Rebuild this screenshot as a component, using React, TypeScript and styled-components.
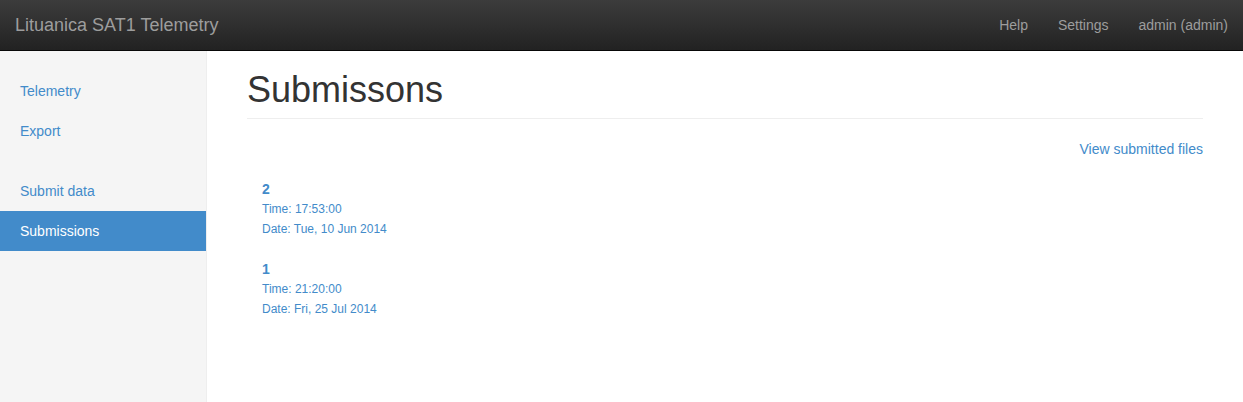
import React from "react";
import styled, { createGlobalStyle } from "styled-components";

const GlobalStyle = createGlobalStyle`
  html, body {
    margin: 0;
    padding: 0;
    background: #fff;
  }
  body {
    font-family: "Liberation Sans", Arial, Helvetica, sans-serif;
    font-size: 14px;
    line-height: 20px;
    color: #333;
  }
  * {
    box-sizing: border-box;
  }
`;

const Page = styled.div`
  display: flex;
  flex-direction: column;
  height: 100vh;
`;

const Navbar = styled.div`
  display: flex;
  align-items: center;
  justify-content: space-between;
  height: 51px;
  flex-shrink: 0;
  padding: 0 15px;
  background: linear-gradient(to bottom, #3c3c3c 0, #222 100%);
  border-bottom: 1px solid #080808;
`;

const Brand = styled.a`
  font-size: 18px;
  line-height: 20px;
  color: #9d9d9d;
  text-decoration: none;
  padding: 15px 0;
`;

const NavRight = styled.ul`
  display: flex;
  list-style: none;
  margin: 0 -15px 0 0;
  padding: 0;
`;

const NavLink = styled.a`
  display: block;
  padding: 15px;
  color: #9d9d9d;
  text-decoration: none;
  font-size: 14px;
  line-height: 20px;
`;

const Body = styled.div`
  display: flex;
  flex: 1;
  min-height: 0;
`;

const Sidebar = styled.div`
  width: 207px;
  flex-shrink: 0;
  background: #f5f5f5;
  border-right: 1px solid #eee;
  padding-top: 20px;
`;

const SideNav = styled.ul`
  list-style: none;
  margin: 0 0 20px 0;
  padding: 0;
`;

const SideLink = styled.a<{ $active?: boolean }>`
  display: block;
  padding: 10px 20px;
  font-size: 14px;
  line-height: 20px;
  text-decoration: none;
  color: ${(p) => (p.$active ? "#fff" : "#428bca")};
  background: ${(p) => (p.$active ? "#428bca" : "transparent")};
`;

const Main = styled.div`
  flex: 1;
  padding: 20px 40px;
`;

const PageHeader = styled.h1`
  margin: 0 0 20px 0;
  padding-bottom: 9px;
  font-size: 36px;
  line-height: 37.6px;
  font-weight: 500;
  color: #333;
  border-bottom: 1px solid #eee;
`;

const Toolbar = styled.div`
  display: flex;
  justify-content: flex-end;
  margin-bottom: 20px;
`;

const Link = styled.a`
  color: #428bca;
  text-decoration: none;
  font-size: 14px;
  line-height: 20px;
`;

const SubmissionList = styled.div`
  display: flex;
  flex-direction: column;
  gap: 20px;
  padding-left: 15px;
`;

const Submission = styled.div`
  display: flex;
  flex-direction: column;
`;

const SubmissionId = styled.a`
  color: #428bca;
  font-weight: bold;
  font-size: 14px;
  line-height: 20px;
  text-decoration: none;
`;

const SubmissionMeta = styled.span`
  color: #428bca;
  font-size: 12px;
  line-height: 20px;
`;

const submissions = [
  { id: 2, time: "17:53:00", date: "Tue, 10 Jun 2014" },
  { id: 1, time: "21:20:00", date: "Fri, 25 Jul 2014" },
];

const App = () => {
  return (
    <Page>
      <GlobalStyle />
      <Navbar>
        <Brand href="#">Lituanica SAT1 Telemetry</Brand>
        <NavRight>
          <li><NavLink href="#">Help</NavLink></li>
          <li><NavLink href="#">Settings</NavLink></li>
          <li><NavLink href="#">admin (admin)</NavLink></li>
        </NavRight>
      </Navbar>
      <Body>
        <Sidebar>
          <SideNav>
            <li><SideLink href="#">Telemetry</SideLink></li>
            <li><SideLink href="#">Export</SideLink></li>
          </SideNav>
          <SideNav>
            <li><SideLink href="#">Submit data</SideLink></li>
            <li><SideLink href="#" $active>Submissions</SideLink></li>
          </SideNav>
        </Sidebar>
        <Main>
          <PageHeader>Submissons</PageHeader>
          <Toolbar>
            <Link href="#">View submitted files</Link>
          </Toolbar>
          <SubmissionList>
            {submissions.map((s) => (
              <Submission key={s.id}>
                <SubmissionId href="#">{s.id}</SubmissionId>
                <SubmissionMeta>Time: {s.time}</SubmissionMeta>
                <SubmissionMeta>Date: {s.date}</SubmissionMeta>
              </Submission>
            ))}
          </SubmissionList>
        </Main>
      </Body>
    </Page>
  );
};

export default App;
